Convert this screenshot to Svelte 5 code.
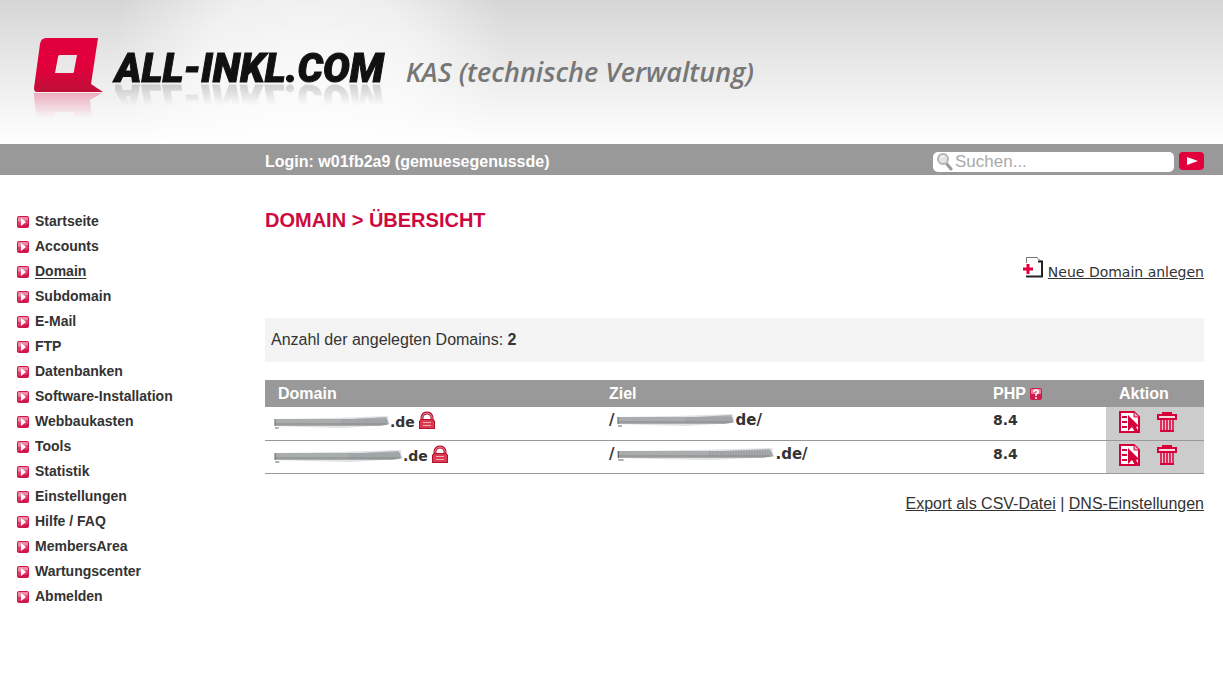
<script>
    const navItems = [
        'Startseite', 'Accounts', 'Domain', 'Subdomain', 'E-Mail', 'FTP', 'Datenbanken',
        'Software-Installation', 'Webbaukasten', 'Tools', 'Statistik', 'Einstellungen',
        'Hilfe / FAQ', 'MembersArea', 'Wartungscenter', 'Abmelden'
    ];

    // Names are masked, only the ending is shown
    const domains = [
        { nameWidth: 116, nameEnd: '.de', targetWidth: 118, targetEnd: 'de/', php: '8.4' },
        { nameWidth: 129, nameEnd: '.de', targetWidth: 158, targetEnd: '.de/', php: '8.4' }
    ];

    let active = $state('Domain');
    let search = $state('');
</script>

{#snippet smudge(width)}
    <svg class='smudge' style:width={width + 'px'} height='14' viewBox='0 0 120 14' preserveAspectRatio='none' aria-hidden='true'>
        <path d='M2 4 L60 3 L90 2 L118 1 L119 10 L70 13 L30 12 L1 11 Z' fill='#d3d6d7' opacity='.7' />
        <path d='M1 4 L80 4 L116 2 L119 9 L110 11 L1 11 Z' fill='#aaadae' />
        <path d='M1 9 H116' stroke='#989b9b' stroke-width='2' />
        <path d='M70 5 H117 M70 7 H117 M70 9 H118' stroke='#8b9196' stroke-width='1' stroke-dasharray='1 1' />
        <path d='M1 4 V11 M1 13 H5' stroke='#666' stroke-width='1' />
    </svg>
{/snippet}

<header>
    <a class='logo' href='#start'>
        <svg class='logo_mark' width='72' height='86' viewBox='0 0 72 86' aria-hidden='true'>
            <defs>
                <linearGradient id='mark' x1='0' y1='0' x2='0' y2='1'>
                    <stop offset='.55' stop-color='#e2003c' />
                    <stop offset='1' stop-color='#bd1039' />
                </linearGradient>
                <linearGradient id='mirror' x1='0' y1='0' x2='0' y2='1'>
                    <stop offset='0' stop-color='#e2003c' stop-opacity='.28' />
                    <stop offset='1' stop-color='#e2003c' stop-opacity='0' />
                </linearGradient>
            </defs>
            <path fill='url(#mark)' fill-rule='evenodd' d='M13 2 H65 L58 48 L70 56 H4 Q1 56 1 52 L7 8 Q8 2 13 2 Z M27 19 Q25 19 25 21 L22 37 H40 Q41 37 41 35 L44 19 Z' />
            <path fill='url(#mirror)' fill-rule='evenodd' d='M1 57 H69 L57 64 L59 82 H4 L1 62 Z M22 76 L23 82 H42 L41 76 Z' />
        </svg>
        <span class='logo_text'>ALL-INKL.COM</span>
    </a>
    <span class='tagline'>KAS (technische Verwaltung)</span>
</header>

<div class='bar'>
    <div class='login'>Login: w01fb2a9 (gemuesegenussde)</div>
    <form class='search' onsubmit={(event) => event.preventDefault()}>
        <label class='search_box'>
            <svg width='18' height='18' viewBox='0 0 18 18' aria-hidden='true'>
                <path d='M10 10 L15 16' stroke='#9a9a9a' stroke-width='3' stroke-linecap='round' />
                <circle cx='7' cy='6' r='5' fill='#e4e4e4' stroke='#b5b5b5' stroke-width='2' />
                <path d='M5 5 Q6 3 8 3' stroke='#fff' fill='none' />
            </svg>
            <input type='text' placeholder='Suchen...' aria-label='Suchen' bind:value={search} />
        </label>
        <button class='search_button' aria-label='Suche starten'>
            <svg width='12' height='8' viewBox='0 0 12 8' aria-hidden='true'><path d='M1 0 L12 4 L1 8 Z' fill='#fff' /></svg>
        </button>
    </form>
</div>

<div class='page'>
    <nav>
        <ul>
            {#each navItems as item}
                <li>
                    <svg width='12' height='12' viewBox='0 0 12 12' aria-hidden='true'>
                        <rect width='12' height='12' rx='2' fill='#cf174a' />
                        <rect x='1' y='1' width='10' height='5' rx='1' fill='#ee8ba7' />
                        <path d='M1 6 L11 4 V8 L1 10 Z' fill='#e23c69' />
                        <path d='M4 2 L9 6 L4 10 Z' fill='#fff' />
                    </svg>
                    <a href='#{item}' class:active={item === active} onclick={() => active = item}>{item}</a>
                </li>
            {/each}
        </ul>
    </nav>

    <main>
        <h1>DOMAIN &gt; ÜBERSICHT</h1>

        <div class='create'>
            <svg width='22' height='22' viewBox='0 0 22 22' aria-hidden='true'>
                <path d='M4.5 7 V1.5 H15' fill='none' stroke='#777' />
                <path d='M15 1.5 L20 6' fill='none' stroke='#777' />
                <path d='M16 5.5 H20 V20.5 H4' fill='none' stroke='#222' stroke-width='2' />
                <path d='M6 8 V18 M1 13 H11' stroke='#e2003c' stroke-width='3' />
            </svg>
            <a href='#neu'>Neue Domain anlegen</a>
        </div>

        <div class='count'>Anzahl der angelegten Domains: <b>{domains.length}</b></div>

        <table>
            <thead>
                <tr>
                    <th class='col_name'>Domain</th>
                    <th class='col_target'>Ziel</th>
                    <th class='col_php'>
                        <span class='cell'>
                            PHP
                            <svg width='12' height='12' viewBox='0 0 12 12' role='img' aria-label='Hilfe'>
                                <rect width='12' height='12' rx='2' fill='#d3194c' />
                                <rect x='1' y='1' width='10' height='5' rx='1' fill='#ea7d9c' />
                                <path d='M4 4 Q4 2 6 2 Q9 2 8 5 L6 6 V8 M6 9 V11' fill='none' stroke='#fff' stroke-width='1.5' />
                            </svg>
                        </span>
                    </th>
                    <th class='col_action'>Aktion</th>
                </tr>
            </thead>
            <tbody>
                {#each domains as domain}
                    <tr>
                        <td class='name'>
                            <span class='cell'>
                                <span class='masked'>{@render smudge(domain.nameWidth)}{domain.nameEnd}</span>
                                <svg class='lock' width='16' height='18' viewBox='0 0 16 18' role='img' aria-label='SSL'>
                                    <path d='M3 9 V6 Q4 2 8 2 Q12 2 13 6 V9' fill='none' stroke='#b3122c' stroke-width='3' />
                                    <path d='M3 8 V6 Q4 2 8 2 Q12 2 13 6 V8' fill='none' stroke='#e58b99' stroke-width='1' />
                                    <path d='M2 8 H14 L16 10 V18 H0 V10 Z' fill='#b3122c' />
                                    <path d='M2 9 H14 L15 11 V17 H1 V11 Z' fill='#dc3a50' />
                                    <path d='M4 11.5 H12 M4 14.5 H12' stroke='#f0aab5' />
                                </svg>
                            </span>
                        </td>
                        <td class='target'>
                            <span class='masked'>/{@render smudge(domain.targetWidth)}{domain.targetEnd}</span>
                        </td>
                        <td class='php'>{domain.php}</td>
                        <td class='actions'>
                            <span class='buttons'>
                                <button aria-label='Bearbeiten'>
                                    <svg width='22' height='22' viewBox='0 0 22 22' aria-hidden='true'>
                                        <path d='M1 1 H15 L20 6 V21 H1 Z' fill='#fff' stroke='#d6003a' stroke-width='2' />
                                        <path d='M15 1 V6 H20' fill='#f6b9c9' stroke='#d6003a' />
                                        <path d='M3 6 H8 M3 11 H8 M3 16 H8' stroke='#d6003a' stroke-width='2' />
                                        <path d='M9 4 L20 15 L17 16 L20 21 H16 L13 16 L9 20 Z' fill='#d6003a' />
                                    </svg>
                                </button>
                                <button aria-label='Löschen'>
                                    <svg width='20' height='22' viewBox='0 0 20 22' aria-hidden='true'>
                                        <path d='M5 1 H15 V4 H5 Z' fill='#d6003a' />
                                        <path d='M1 4 H19 V8 H1 Z' fill='#f7dbe2' stroke='#d6003a' stroke-width='2' />
                                        <path d='M3 9 H17 V20 H3 Z' fill='#f7c3cf' />
                                        <path d='M4 9 V20 M7 9 V20 M10 9 V20 M13 9 V20 M16 9 V20' stroke='#d6003a' stroke-width='1.5' />
                                        <path d='M3 20 H17' stroke='#d6003a' stroke-width='2' />
                                    </svg>
                                </button>
                            </span>
                        </td>
                    </tr>
                {/each}
            </tbody>
        </table>

        <div class='links'>
            <a href='#export'>Export als CSV-Datei</a> | <a href='#dns'>DNS-Einstellungen</a>
        </div>
    </main>
</div>

<style>
    :global(body) {
        background: #fff;
        color: #333;
        font-family: "Liberation Sans", Arial, sans-serif;
        font-size: 16px;
        line-height: 20px;
    }

    a {
        color: inherit;
    }

    svg {
        display: block;
        flex-shrink: 0;
    }

    button {
        border: 0;
        padding: 0;
        background: none;
        cursor: pointer;
    }

    header {
        display: flex;
        align-items: flex-start;
        gap: 22px;
        padding: 36px 33px 22px;
        background:
            linear-gradient(to bottom, #fff0 0%, #fff 100%),
            radial-gradient(ellipse 200px 170px at 310px 60px, #fffb 0%, #fff9 50%, #fff0 100%),
            #d6d6d6;
    }

    .logo {
        display: flex;
        align-items: flex-start;
        gap: 10px;
        text-decoration: none;
    }

    .logo_text {
        padding-top: 9px;
        font-family: Roboto, sans-serif;
        font-size: 40px;
        font-weight: 900;
        font-style: italic;
        line-height: 48px;
        color: #111;
        -webkit-text-stroke: 1px #111;
        -webkit-box-reflect: below -19px linear-gradient(transparent 45%, #0004);
    }

    .tagline {
        padding-top: 20px;
        font-family: "Open Sans", sans-serif;
        font-size: 27px;
        font-weight: 600;
        font-style: italic;
        line-height: 32px;
        color: #777;
    }

    .bar {
        display: flex;
        align-items: center;
        justify-content: space-between;
        padding: 0 19px 0 265px;
        background: #999;
    }

    .login {
        padding: 8px 0 3px;
        font-weight: bold;
        line-height: 20px;
        color: #fff;
    }

    .search {
        display: flex;
        gap: 5px;
        padding-top: 5px;
    }

    .search_box {
        display: flex;
        align-items: center;
        width: 238px;
        height: 20px;
        padding-left: 3px;
        border-radius: 5px;
        background: #fff;
    }

    .search_box input {
        flex-grow: 1;
        min-width: 0;
        border: 0;
        padding: 0 1px;
        outline: 0;
        background: none;
        color: #333;
        font: inherit;
        font-size: 17px;
    }

    .search_box input::placeholder {
        color: #aaa;
    }

    .search_button {
        display: flex;
        align-items: center;
        justify-content: center;
        width: 25px;
        height: 18px;
        border-radius: 4px;
        background: #e2003c;
    }

    .page {
        display: flex;
        padding: 34px 19px 20px 17px;
    }

    nav {
        width: 248px;
        flex-shrink: 0;
    }

    ul {
        list-style: none;
        margin: 0;
        padding: 0;
        font-size: 14px;
        font-weight: bold;
        line-height: 25px;
    }

    li {
        display: flex;
        align-items: center;
        gap: 6px;
    }

    li a {
        text-decoration: none;
    }

    li a.active {
        text-decoration: underline;
        text-underline-offset: 2px;
    }

    main {
        flex-grow: 1;
    }

    h1 {
        margin: 0;
        color: #cc0a40;
        font-size: 20px;
        line-height: 22px;
    }

    .create {
        display: flex;
        align-items: center;
        justify-content: flex-end;
        gap: 4px;
        margin-top: 21px;
        font-family: "DejaVu Sans", Verdana, sans-serif;
        font-size: 14px;
    }

    .create a {
        padding-top: 10px;
    }

    .count {
        margin-top: 36px;
        padding: 12px 6px;
        background: #f4f4f4;
    }

    table {
        width: 100%;
        margin-top: 18px;
        border-collapse: collapse;
        table-layout: fixed;
    }

    th {
        height: 27px;
        padding: 0 13px;
        background: #999;
        color: #fff;
        text-align: left;
    }

    .col_name {
        width: 305px;
    }

    .col_php {
        width: 100px;
    }

    .col_action {
        width: 72px;
    }

    td {
        box-sizing: border-box;
        height: 33px;
        padding: 0 13px 6px;
        border-bottom: 1px solid #999;
        font-family: "DejaVu Sans", Verdana, sans-serif;
        font-size: 14px;
        font-weight: bold;
    }

    .cell {
        display: flex;
        align-items: center;
        gap: 4px;
    }

    .masked {
        display: flex;
        align-items: center;
    }

    td.name {
        padding: 0 9px 2px;
    }

    .lock {
        margin-bottom: 4px;
    }

    td.target {
        font-size: 15px;
    }

    td.target .smudge {
        margin-left: 3px;
    }

    td.actions {
        padding-bottom: 3px;
        background: #ccc;
    }

    .buttons {
        display: flex;
        gap: 16px;
    }

    .links {
        margin-top: 20px;
        text-align: right;
    }
</style>
